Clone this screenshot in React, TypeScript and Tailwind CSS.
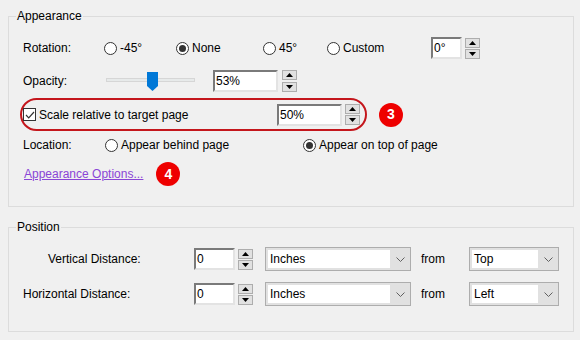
import React from "react";

function Radio({ label, checked, className }: { label: string; checked?: boolean; className?: string }) {
  return (
    <div className={"flex items-center " + (className ?? "")}>
      <span className="flex h-[13px] w-[13px] items-center justify-center rounded-full border border-[#333333] bg-white">
        {checked && <span className="h-[7px] w-[7px] rounded-full bg-[#333333]" />}
      </span>
      <span className="ml-[3px]">{label}</span>
    </div>
  );
}

function Spinner({ gap }: { gap?: string }) {
  return (
    <div className={"flex w-[15px] flex-col " + (gap ?? "gap-px")}>
      {[true, false].map((up) => (
        <div
          key={String(up)}
          className="flex h-[10px] items-center justify-center border border-[#adadad] bg-[#e1e1e1]"
        >
          <svg width="7" height="4" viewBox="0 0 7 4">
            {up ? <path d="M3.5 0 L7 4 L0 4 Z" fill="#000" /> : <path d="M0 0 L7 0 L3.5 4 Z" fill="#000" />}
          </svg>
        </div>
      ))}
    </div>
  );
}

function Field({ value, className }: { value: string; className: string }) {
  return (
    <div
      className={
        "flex h-[22px] items-center border-2 border-t-[#7a7a7a] border-l-[#7a7a7a] border-r-[#e3e3e3] border-b-[#e3e3e3] bg-white pl-[1px] " +
        className
      }
    >
      {value}
    </div>
  );
}

function Select({ value, className }: { value: string; className: string }) {
  return (
    <div className={"flex h-[24px] items-center border border-[#adadad] bg-[#e1e1e1] " + className}>
      <div className="ml-[2px] flex h-[18px] flex-1 items-center bg-white pl-[2px]">{value}</div>
      <div className="flex w-[20px] items-center justify-center">
        <svg width="9" height="5" viewBox="0 0 9 5">
          <path d="M0.5 0.5 L4.5 4.5 L8.5 0.5" fill="none" stroke="#606060" strokeWidth="1" />
        </svg>
      </div>
    </div>
  );
}

function Badge({ n }: { n: string }) {
  return (
    <div className="flex h-[24px] w-[24px] items-center justify-center rounded-full bg-[#ee0000] text-[14px] font-bold text-white">
      {n}
    </div>
  );
}

export default function App() {
  return (
    <div
      className="h-[340px] w-[580px] bg-[#f0f0f0] pt-2 text-[12px] text-black"
      style={{ fontFamily: '"Liberation Sans", Arial, sans-serif' }}
    >
      <fieldset className="mx-2 w-[566px] border border-[#dcdcdc] p-0 pb-[22px]">
        <legend className="ml-[7px] px-[1px] leading-4">Appearance</legend>

        <div className="mt-[13px] flex h-[22px] items-center pl-[14px]">
          <span className="w-[81px]">Rotation:</span>
          <Radio label="-45°" className="w-[72px]" />
          <Radio label="None" checked className="w-[87px]" />
          <Radio label="45°" className="w-[64px]" />
          <Radio label="Custom" className="w-[104px]" />
          <Field value="0°" className="w-[31px]" />
          <div className="ml-[3px]">
            <Spinner />
          </div>
        </div>

        <div className="mt-[11px] flex h-[22px] items-center pl-[14px]">
          <span className="w-[83px]">Opacity:</span>
          <div className="relative h-[22px] w-[89px]">
            <div className="absolute top-[8px] left-0 h-[4px] w-[89px] border border-[#d6d6d6] bg-[#e7eaea]" />
            <svg className="absolute top-[2px] left-[41px]" width="11" height="19" viewBox="0 0 11 19">
              <path d="M0 0 H11 V14 L5.5 19 L0 14 Z" fill="#0078d7" />
            </svg>
          </div>
          <Field value="53%" className="ml-[18px] w-[65px]" />
          <div className="ml-[4px]">
            <Spinner gap="gap-[2px]" />
          </div>
        </div>

        <div className="mt-[6px] flex items-center">
          <div className="ml-[11px] flex h-[33px] w-[347px] items-center rounded-full border-2 border-[#c4161c] pr-[5px] pl-[1px]">
            <span className="flex h-[13px] w-[13px] items-center justify-center border border-[#333333] bg-white">
              <svg width="10" height="8" viewBox="0 0 10 8">
                <path d="M1 4 L3.7 6.8 L9 1" fill="none" stroke="#333" strokeWidth="1.2" />
              </svg>
            </span>
            <span className="ml-[3px]">Scale relative to target page</span>
            <div className="flex-1" />
            <Field value="50%" className="w-[65px]" />
            <div className="ml-[3px]">
              <Spinner />
            </div>
          </div>
          <div className="ml-[12px]">
            <Badge n="3" />
          </div>
        </div>

        <div className="mt-[4px] flex h-[20px] items-center pl-[14px]">
          <span className="w-[82px]">Location:</span>
          <Radio label="Appear behind page" className="w-[198px]" />
          <Radio label="Appear on top of page" checked />
        </div>

        <div className="mt-[9px] flex h-[20px] items-center pl-[15px]">
          <a className="text-[#8a45d6] underline">Appearance Options...</a>
          <div className="ml-[13px]">
            <Badge n="4" />
          </div>
        </div>
      </fieldset>

      <fieldset className="mx-2 mt-[12px] w-[566px] border border-[#dcdcdc] p-0 pb-[25px]">
        <legend className="ml-[7px] px-[1px] leading-4">Position</legend>

        <div className="mt-[12px] flex h-[24px] items-center pl-[14px]">
          <span className="w-[171px] pl-[25px]">Vertical Distance:</span>
          <Field value="0" className="w-[41px]" />
          <div className="ml-[3px]">
            <Spinner />
          </div>
          <Select value="Inches" className="ml-[12px] w-[146px]" />
          <span className="ml-[10px] w-[48px]">from</span>
          <Select value="Top" className="w-[90px]" />
        </div>

        <div className="mt-[11px] flex h-[24px] items-center pl-[14px]">
          <span className="w-[171px]">Horizontal Distance:</span>
          <Field value="0" className="w-[41px]" />
          <div className="ml-[3px]">
            <Spinner />
          </div>
          <Select value="Inches" className="ml-[12px] w-[146px]" />
          <span className="ml-[10px] w-[48px]">from</span>
          <Select value="Left" className="w-[90px]" />
        </div>
      </fieldset>
    </div>
  );
}
